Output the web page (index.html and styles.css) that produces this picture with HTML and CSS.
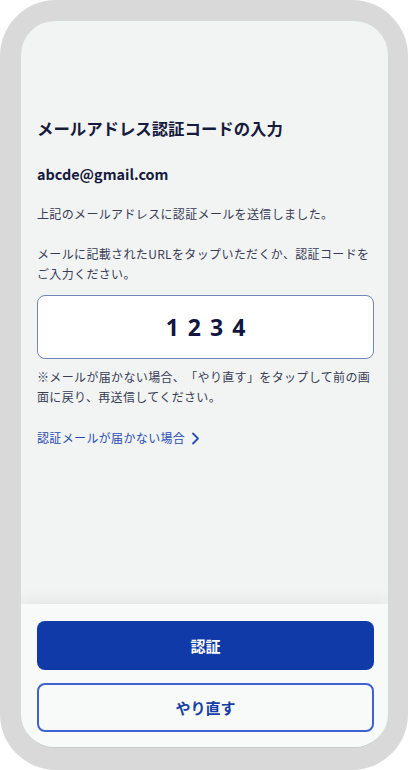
FILE: index.html
```html
<!DOCTYPE html>
<html lang="ja">
<head>
<meta charset="utf-8">
<title>メールアドレス認証コードの入力</title>
<link rel="stylesheet" href="styles.css">
</head>
<body>
<div class="phone">
  <div class="screen">
    <main class="content">
      <h1 class="title">メールアドレス認証コードの入力</h1>
      <p class="email">abcde@gmail.com</p>
      <p class="text sent">上記のメールアドレスに認証メールを送信しました。</p>
      <p class="text guide">メールに記載されたURLをタップいただくか、認証コードをご入力ください。</p>
      <div class="code-box"><span class="code">1234</span></div>
      <p class="text note">※メールが届かない場合、「やり直す」をタップして前の画面に戻り、再送信してください。</p>
      <a class="link" href="#">認証メールが届かない場合<svg class="chev" width="9" height="13" viewBox="0 0 9 13"><path d="M2 1.5 L7 6.5 L2 11.5" fill="none" stroke="currentColor" stroke-width="1.8" stroke-linecap="round" stroke-linejoin="round"/></svg></a>
    </main>
    <footer class="footer">
      <button class="btn primary">認証</button>
      <button class="btn outline">やり直す</button>
    </footer>
  </div>
</div>
</body>
</html>
```
FILE: styles.css
```css
* { box-sizing: border-box; }
html, body { margin: 0; padding: 0; background: #ffffff; }
body {
  font-family: "Noto Sans CJK JP", "Noto Sans", sans-serif;
  width: 408px;
  height: 770px;
  overflow: hidden;
  text-spacing-trim: space-all;
}
.phone {
  width: 408px;
  height: 770px;
  background: #d9d9d9;
  border-radius: 56px;
  padding: 21px 20px 22px 21px;
  display: flex;
}
.screen {
  flex: 1;
  background: #f2f4f4;
  border-radius: 34px;
  overflow: hidden;
  display: flex;
  flex-direction: column;
  border-bottom: 1px solid #c9cbcb;
}
.content {
  flex: 1;
  padding: 95px 14px 0 16px;
  display: flex;
  flex-direction: column;
}
.title {
  margin: 0;
  font-size: 16.4px;
  line-height: 24px;
  font-weight: 700;
  color: #161a3c;
}
.email {
  margin: 23px 0 0;
  font-size: 14.4px;
  line-height: 22px;
  font-weight: 700;
  color: #161a3c;
}
.text {
  margin: 0;
  font-size: 12px;
  line-height: 20px;
  letter-spacing: 0.35px;
  color: #383c55;
}
.sent { margin-top: 19px; }
.guide { margin-top: 20px; }
.code-box {
  margin-top: 11px;
  height: 64px;
  background: #ffffff;
  border: 1px solid #7285b9;
  border-radius: 8px;
  display: flex;
  align-items: center;
  justify-content: center;
}
.code {
  font-family: "Noto Sans", sans-serif;
  font-size: 23px;
  font-weight: 700;
  letter-spacing: 9px;
  padding-left: 9px;
  color: #121640;
}
.note { margin-top: 8px; }
.link {
  margin-top: 21px;
  font-size: 12px;
  line-height: 20px;
  letter-spacing: 0.35px;
  color: #2a4cb5;
  text-decoration: none;
  display: flex;
  align-items: center;
  gap: 6px;
}
.chev { display: block; }
.footer {
  background: #f8fafa;
  box-shadow: 0 -4px 14px rgba(0, 0, 0, 0.06);
  padding: 17px 14px 15px 16px;
  display: flex;
  flex-direction: column;
  gap: 13px;
  position: relative;
}
.btn {
  height: 49px;
  border-radius: 8px;
  font-family: "Noto Sans CJK JP", sans-serif;
  font-size: 15px;
  font-weight: 700;
  cursor: pointer;
}
.primary {
  background: #0f3aa8;
  color: #ffffff;
  border: none;
}
.outline {
  background: #f8fafa;
  color: #173fa5;
  border: 2px solid #3f63cc;
}
```
